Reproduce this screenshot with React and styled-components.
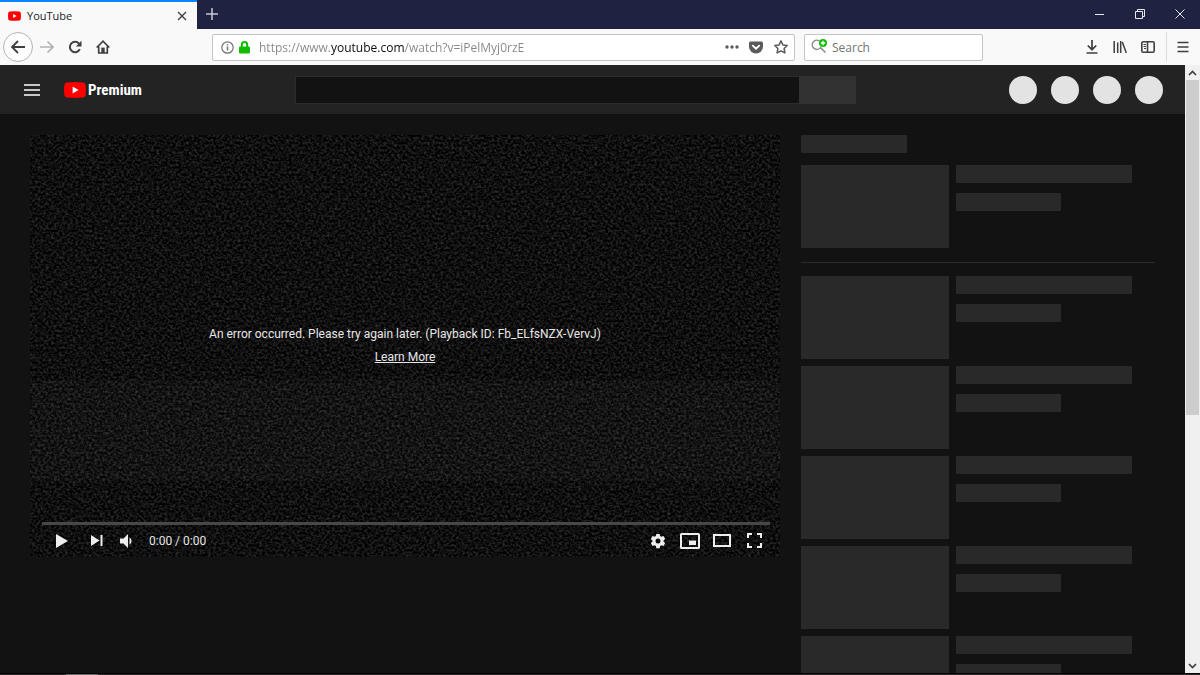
import React from 'react';
import styled, { createGlobalStyle } from 'styled-components';

const GlobalStyle = createGlobalStyle`
    * {
        box-sizing: border-box;
    }
    html,
    body,
    #root {
        height: 100%;
        margin: 0;
    }
    body {
        background: #121212;
        font-family: 'Open Sans', 'Noto Sans', sans-serif;
        overflow: hidden;
    }
    svg {
        display: block;
    }
`;

const BrowserWindow = styled.div`
    display: flex;
    flex-direction: column;
    height: 100vh;
`;

/* TAB STRIP */
const TabStrip = styled.div`
    display: flex;
    height: 29px;
    flex: none;
    background: #1f2240;
`;

const Tab = styled.div`
    display: flex;
    align-items: center;
    gap: 6px;
    width: 197px;
    padding: 0 6px 0 8px;
    border-top: 2px solid #0a84ff;
    background: #f9f9fa;
    color: #1c1c1e;
    font-size: 11px;
`;

const TabTitle = styled.span`
    flex: 1;
`;

const IconButton = styled.button`
    display: flex;
    align-items: center;
    justify-content: center;
    flex: none;
    width: ${p => p.$width || 28}px;
    height: ${p => p.$height || 28}px;
    padding: 0;
    border: none;
    background: none;
    color: ${p => p.$color || '#3f3f42'};
`;

const WindowButtons = styled.div`
    display: flex;
    margin-left: auto;
`;

/* NAV BAR */
const NavBar = styled.div`
    display: flex;
    align-items: center;
    flex: none;
    height: 36px;
    padding: 0 3px;
    background: #f9f9fa;
`;

const BackButton = styled(IconButton)`
    border: 1px solid #b4b4b6;
    border-radius: 50%;
    background: #fdfdfd;
`;

const Spacer = styled.div`
    flex: 16 1 0;
`;

const Field = styled.div`
    display: flex;
    align-items: center;
    height: 27px;
    border: 1px solid #c4c4c6;
    border-radius: 2px;
    background: #fff;
`;

const UrlField = styled(Field)`
    flex: 97 1 0;
    min-width: 0;
    margin-right: 9px;
    padding: 0 0 0 5px;
`;

const SearchField = styled(Field)`
    flex: 0 1 179px;
    min-width: 0;
    padding-left: 6px;
`;

const TextInput = styled.input`
    flex: 1;
    min-width: 0;
    height: 100%;
    padding: 0;
    border: none;
    outline: none;
    background: none;
    color: #737373;
    font-family: inherit;
    font-size: 12px;

    &::placeholder {
        color: #737373;
        opacity: 1;
    }
`;

// the domain is darker than the rest of the address
const UrlInput = styled(TextInput)`
    margin-left: 6px;
    background: linear-gradient(
        to right,
        #858585 71px,
        #0c0c0d 71px,
        #0c0c0d 146px,
        #858585 146px
    );
    background-clip: text;
    -webkit-background-clip: text;
    color: transparent;
`;

const SearchInput = styled(TextInput)`
    margin-left: 5px;
`;

const Divider = styled.div`
    width: 1px;
    height: 30px;
    margin: 0 2px 0 4px;
    background: #dcdcde;
`;

/* PAGE */
const Viewport = styled.div`
    display: flex;
    flex: 1;
    min-height: 0;
`;

const Page = styled.div`
    flex: 1;
    min-width: 0;
    overflow: hidden;
    background: #121212;
`;

const Masthead = styled.header`
    display: flex;
    align-items: center;
    justify-content: space-between;
    height: 49px;
    padding: 0 22px 0 18px;
    background: #232323;
`;

const Brand = styled.div`
    display: flex;
    align-items: center;
    gap: 18px;
`;

const LogoLink = styled.a`
    display: flex;
    align-items: center;
    gap: 2px;
    color: #fff;
    font-family: 'Liberation Sans Narrow', 'Roboto Condensed', Roboto, sans-serif;
    font-size: 15px;
    font-weight: 700;
    text-decoration: none;
`;

const MastheadSearch = styled.form`
    display: flex;
    flex: 0 1 561px;
    height: 28px;
`;

const MastheadInput = styled.input`
    flex: 1;
    min-width: 0;
    padding: 0 8px;
    border: 1px solid #2c2c2c;
    border-right: none;
    outline: none;
    background: #121212;
    color: #eee;
`;

const MastheadSubmit = styled.button`
    width: 57px;
    border: none;
    background: #323232;
`;

const Avatars = styled.div`
    display: flex;
    gap: 14px;
`;

const Avatar = styled.div`
    width: 28px;
    height: 28px;
    border-radius: 50%;
    background: #e3e3e3;
`;

const Columns = styled.div`
    display: flex;
    align-items: flex-start;
    gap: 21px;
    padding: 21px 30px;
`;

/* PLAYER */
const Player = styled.section`
    display: grid;
    flex: 1;
    min-width: 0;
    aspect-ratio: 16 / 9;
    background: #0c0c0c;
    color: #e6e6e6;
    font-family: Roboto, sans-serif;

    > * {
        grid-area: 1 / 1;
        min-width: 0;
        min-height: 0;
    }
`;

const Static = styled.svg`
    width: 100%;
    height: 100%;
`;

const ErrorMessage = styled.div`
    position: relative;
    align-self: center;
    text-align: center;
    font-size: 12px;
    line-height: 23px;

    a {
        color: inherit;
    }
`;

const Controls = styled.div`
    position: relative;
    align-self: end;
    padding: 0 10px 0 12px;
`;

const Progress = styled.div`
    height: 3px;
    background: #484848;
`;

const ControlRow = styled.div`
    display: flex;
    align-items: center;
    height: 32px;
`;

const Time = styled.span`
    flex: 1;
    padding-left: 9px;
    font-size: 12px;
`;

/* RELATED */
const Related = styled.aside`
    width: 354px;
    flex: none;
`;

const Bar = styled.div`
    width: ${p => p.$width}px;
    height: 18px;
    border-radius: 1px;
    background: #292929;
`;

const UpNext = styled.div`
    display: grid;
    gap: 12px;
    padding-bottom: 14px;
    border-bottom: 1px solid #292929;
    margin-bottom: 13px;
`;

const RelatedList = styled.div`
    display: grid;
    gap: 7px;
`;

const VideoRow = styled.div`
    display: flex;
    gap: 7px;
`;

const Thumbnail = styled.div`
    width: 148px;
    height: 83px;
    background: #292929;
`;

const Meta = styled.div`
    display: grid;
    align-content: start;
    gap: 10px;
`;

/* SCROLL BAR */
const ScrollBar = styled.div`
    display: flex;
    flex-direction: column;
    justify-content: space-between;
    flex: none;
    width: 15px;
    background: #f0f0f0;
`;

const ScrollTrack = styled.div`
    flex: 1;
    padding: 0 1px;
`;

const ScrollThumb = styled.div`
    height: 58%;
    background: #cdcdcd;
`;

const TaskbarEdge = styled.footer`
    flex: none;
    height: 2px;
    padding-left: 66px;
    border-top: 1px solid #050305;
    background: #2a2829;
`;

const TaskbarItem = styled.div`
    width: 32px;
    height: 1px;
    background: #6a6a6a;
`;

const Icon = ({ size = 16, width, height, children, ...rest }) => (
    <svg
        width={width || size}
        height={height || size}
        viewBox={`0 0 ${width || size} ${height || size}`}
        fill="none"
        stroke="currentColor"
        strokeWidth="2"
        aria-hidden="true"
        {...rest}
    >
        {children}
    </svg>
);

const PlayBadge = ({ width, height }) => (
    <svg width={width} height={height} viewBox="0 0 22 16" aria-hidden="true">
        <path
            fill="#f00"
            d="M3 .4Q11-.3 19 .4 21.400.6 21.600 3 22.200 8 21.600 13 21.400 15.400 19 15.600 11 16.300 3 15.600.6 15.400.4 13-.2 8 .4 3 .6.6 3 .4Z"
        />
        <path fill="#fff" d="M8.600 4.600v6.800L14.600 8Z" />
    </svg>
);

const CloseIcon = () => (
    <Icon size={10} strokeWidth="1.400">
        <path d="M1 1l8 8M9 1L1 9" />
    </Icon>
);

const ChevronIcon = ({ down }) => (
    <Icon width={9} height={6} strokeWidth="1.700">
        <path d={down ? 'M1 1l3.500 3.500L8 1' : 'M1 5l3.500-3.500L8 5'} />
    </Icon>
);

const GearIcon = () => (
    <Icon size={16} stroke="none" fill="currentColor">
        <path
            fillRule="evenodd"
            d="M6.300.9h3.400l.4 2.100 1.400.8 2-.8 1.700 2.900-1.600 1.400v1.500l1.600 1.300-1.700 2.900-2-.7-1.400.8-.4 2.100H6.300l-.4-2.100-1.400-.8-2 .7-1.700-2.900 1.600-1.300V7.300L.8 5.900 2.500 3l2 .8L5.900 3ZM8 5.500a2.500 2.500 0 100 5 2.500 2.500 0 000-5Z"
        />
    </Icon>
);

const StaticNoise = () => (
    <Static aria-hidden="true">
        <filter
            id="static"
            x="0"
            y="0"
            width="100%"
            height="100%"
            colorInterpolationFilters="sRGB"
        >
            <feTurbulence
                type="fractalNoise"
                baseFrequency="0.37 0.41"
                numOctaves="3"
                seed="7"
            />
            <feColorMatrix values=".36 0 0 0 -.12  .36 0 0 0 -.12  .36 0 0 0 -.12  0 0 0 0 1" />
        </filter>
        <rect width="100%" height="100%" filter="url(#static)" />
        <rect y="58%" width="100%" height="24%" fill="#fff" opacity=".025" />
    </Static>
);

const Video = () => (
    <VideoRow>
        <Thumbnail />
        <Meta>
            <Bar $width={176} />
            <Bar $width={105} />
        </Meta>
    </VideoRow>
);

const Tabs = () => (
    <TabStrip>
        <Tab>
            <PlayBadge width={13} height={10} />
            <TabTitle>YouTube</TabTitle>
            <IconButton $width={18} $height={18} aria-label="Close tab">
                <CloseIcon />
            </IconButton>
        </Tab>
        <IconButton $width={30} $color="#c9cad6" aria-label="New tab">
            <Icon size={12} strokeWidth="1.500">
                <path d="M6 0v12M0 6h12" />
            </Icon>
        </IconButton>
        <WindowButtons>
            <IconButton $width={40} $color="#e8e8f0" aria-label="Minimize">
                <Icon size={10} strokeWidth="1">
                    <path d="M0 5.500h9" />
                </Icon>
            </IconButton>
            <IconButton $width={40} $color="#e8e8f0" aria-label="Restore">
                <Icon size={10} strokeWidth="1">
                    <path d="M.5 2.500h7v7h-7ZM2.500 2.500v-2h7v7h-2" />
                </Icon>
            </IconButton>
            <IconButton $width={40} $color="#e8e8f0" aria-label="Close window">
                <Icon size={10} strokeWidth="1">
                    <path d="M.5.5l9 9M9.500.5l-9 9" />
                </Icon>
            </IconButton>
        </WindowButtons>
    </TabStrip>
);

const Navigation = () => (
    <NavBar>
        <BackButton $width={30} $height={30} aria-label="Back">
            <Icon size={16} strokeWidth="1.800">
                <path d="M15 8H2M8 2L2 8l6 6" />
            </Icon>
        </BackButton>
        <IconButton $color="#b2b2b4" aria-label="Forward">
            <Icon size={14} strokeWidth="1.600">
                <path d="M0 7h13M7.500 1.500L13 7l-5.500 5.500" />
            </Icon>
        </IconButton>
        <IconButton aria-label="Reload">
            <Icon size={14}>
                <path d="M11.800 9.200A5.200 5.200 0 1 1 11 3.600" />
                <path
                    d="M13.500.8v5.700H7.800Z"
                    fill="currentColor"
                    stroke="none"
                />
            </Icon>
        </IconButton>
        <IconButton aria-label="Home">
            <Icon size={14} strokeWidth="1.700">
                <path d="M.7 7.500L7 1.200l6.300 6.300M2.700 6.500V13h8.600V6.500" />
                <path
                    d="M5.300 13V7.600h3.400V13Z"
                    fill="currentColor"
                    stroke="none"
                />
            </Icon>
        </IconButton>
        <Spacer />
        <UrlField>
            <IconButton $width={18} $color="#737373" aria-label="Site information">
                <Icon size={13} strokeWidth="1.200">
                    <circle cx="6.500" cy="6.500" r="5.700" />
                    <path d="M6.500 5.600v4M6.500 3.200v1.400" strokeWidth="1.500" />
                </Icon>
            </IconButton>
            <IconButton $width={17} $color="#12bc00" aria-label="Secure connection">
                <Icon width={11} height={13}>
                    <path d="M2.800 6V3.800a2.700 2.700 0 015.400 0V6" />
                    <rect
                        y="5.500"
                        width="11"
                        height="7"
                        rx="1"
                        fill="currentColor"
                        stroke="none"
                    />
                </Icon>
            </IconButton>
            <UrlInput
                aria-label="Address"
                defaultValue="https://www.youtube.com/watch?v=iPelMyj0rzE"
                spellCheck={false}
            />
            <IconButton $width={24} $color="#5a5a5c" aria-label="Page actions">
                <Icon width={14} height={4} fill="currentColor" stroke="none">
                    <circle cx="2" cy="2" r="1.700" />
                    <circle cx="7" cy="2" r="1.700" />
                    <circle cx="12" cy="2" r="1.700" />
                </Icon>
            </IconButton>
            <IconButton $width={25} $color="#5a5a5c" aria-label="Save to Pocket">
                <Icon width={14} height={13}>
                    <path
                        d="M1.500.5h11Q14 .5 14 2v3.500a7 7 0 01-14 0V2Q0 .5 1.500.5Z"
                        fill="currentColor"
                        stroke="none"
                    />
                    <path
                        d="M3.800 4.600L7 7.700l3.200-3.100"
                        stroke="#fff"
                        strokeWidth="1.800"
                        strokeLinecap="round"
                    />
                </Icon>
            </IconButton>
            <IconButton $width={25} $color="#5a5a5c" aria-label="Bookmark this page">
                <Icon size={14} strokeWidth="1.500" strokeLinejoin="round">
                    <path d="M7 .9l1.900 4 4.300.6-3.100 3 .8 4.400L7 10.800l-3.900 2.100.8-4.400-3.100-3 4.300-.6Z" />
                </Icon>
            </IconButton>
        </UrlField>
        <SearchField>
            <Icon size={16} color="#8a8a8c" strokeWidth="1.500">
                <path d="M8.500 2A4.600 4.600 0 1 0 9.500 8.600L14.500 13.500" />
                <circle cx="12" cy="4" r="4" fill="#12bc00" stroke="none" />
                <path d="M12 1.800v4.400M9.800 4h4.400" stroke="#fff" strokeWidth="1.300" />
            </Icon>
            <SearchInput aria-label="Search the web" placeholder="Search" />
        </SearchField>
        <Spacer />
        <IconButton aria-label="Downloads">
            <Icon size={14} strokeWidth="1.700">
                <path d="M7 0v9.500M2.800 5.500L7 9.700l4.200-4.200M1.500 13h11" />
            </Icon>
        </IconButton>
        <IconButton aria-label="Library">
            <Icon size={14} strokeWidth="1.500">
                <path d="M1.200 1v12M4.700 2.500V13M7.700 1v12M9.300 2l4 11" />
            </Icon>
        </IconButton>
        <IconButton aria-label="Sidebars">
            <Icon width={14} height={12} strokeWidth="1.600">
                <rect x=".8" y=".8" width="12.400" height="10.400" rx="1.500" />
                <path d="M6.500 1v10" />
                <path d="M2.500 3.500H5M2.500 5.500H5M3 7.500h2" strokeWidth="1" />
            </Icon>
        </IconButton>
        <Divider />
        <IconButton aria-label="Open menu">
            <Icon size={12} strokeWidth="1.600">
                <path d="M.5 1.500h11M.5 6h11M.5 10.500h11" />
            </Icon>
        </IconButton>
    </NavBar>
);

const VideoPlayer = () => (
    <Player>
        <StaticNoise />
        <ErrorMessage>
            <div>
                An error occurred. Please try again later. (Playback ID:
                Fb_ELfsNZX-VervJ)
            </div>
            <a href="#learn-more">Learn More</a>
        </ErrorMessage>
        <Controls>
            <Progress />
            <ControlRow>
                <IconButton $width={40} $color="#eee" aria-label="Play">
                    <Icon width={12} height={14} fill="currentColor" stroke="none">
                        <path d="M0 0l12 7-12 7Z" />
                    </Icon>
                </IconButton>
                <IconButton $width={30} $color="#eee" aria-label="Next">
                    <Icon width={12} height={11} fill="currentColor" stroke="none">
                        <path d="M0 0l8.500 5.500L0 11ZM9.500 0h2v11h-2Z" />
                    </Icon>
                </IconButton>
                <IconButton $color="#eee" aria-label="Mute">
                    <Icon width={13} height={14} fill="currentColor" stroke="none">
                        <path d="M0 4.500h3.500L8 0v14L3.500 9.500H0ZM9.500 3.600a3.800 3.800 0 010 6.800Z" />
                    </Icon>
                </IconButton>
                <Time>0:00 / 0:00</Time>
                <IconButton $width={32} $color="#eee" aria-label="Settings">
                    <GearIcon />
                </IconButton>
                <IconButton $width={32} $color="#eee" aria-label="Miniplayer">
                    <Icon width={20} height={16}>
                        <rect x="1" y="1" width="18" height="14" rx=".5" />
                        <path
                            d="M9 7.500h7V12H9Z"
                            fill="currentColor"
                            stroke="none"
                        />
                    </Icon>
                </IconButton>
                <IconButton $width={32} $color="#eee" aria-label="Theater mode">
                    <Icon width={18} height={13}>
                        <rect x="1" y="1" width="16" height="11" />
                    </Icon>
                </IconButton>
                <IconButton $width={32} $color="#eee" aria-label="Full screen">
                    <Icon width={15} height={15}>
                        <path d="M1 5V1h4M10 1h4v4M14 10v4h-4M5 14H1v-4" />
                    </Icon>
                </IconButton>
            </ControlRow>
        </Controls>
    </Player>
);

const App = () => (
    <>
        <GlobalStyle />
        <BrowserWindow>
            <Tabs />
            <Navigation />
            <Viewport>
                <Page>
                    <Masthead>
                        <Brand>
                            <IconButton $color="#fff" aria-label="Guide">
                                <Icon width={16} height={12} strokeWidth="1.700">
                                    <path d="M0 1h16M0 6h16M0 11h16" />
                                </Icon>
                            </IconButton>
                            <LogoLink href="#home">
                                <PlayBadge width={22} height={16} />
                                Premium
                            </LogoLink>
                        </Brand>
                        <MastheadSearch>
                            <MastheadInput aria-label="Search videos" />
                            <MastheadSubmit type="button" aria-label="Search" />
                        </MastheadSearch>
                        <Avatars>
                            {[1, 2, 3, 4].map(n => (
                                <Avatar key={n} />
                            ))}
                        </Avatars>
                    </Masthead>
                    <Columns>
                        <VideoPlayer />
                        <Related>
                            <UpNext>
                                <Bar $width={106} />
                                <Video />
                            </UpNext>
                            <RelatedList>
                                {[1, 2, 3, 4, 5].map(n => (
                                    <Video key={n} />
                                ))}
                            </RelatedList>
                        </Related>
                    </Columns>
                </Page>
                <ScrollBar>
                    <IconButton $width={15} $height={15} aria-label="Scroll up">
                        <ChevronIcon />
                    </IconButton>
                    <ScrollTrack>
                        <ScrollThumb />
                    </ScrollTrack>
                    <IconButton $width={15} $height={15} aria-label="Scroll down">
                        <ChevronIcon down />
                    </IconButton>
                </ScrollBar>
            </Viewport>
            <TaskbarEdge>
                <TaskbarItem />
            </TaskbarEdge>
        </BrowserWindow>
    </>
);

export default App;
